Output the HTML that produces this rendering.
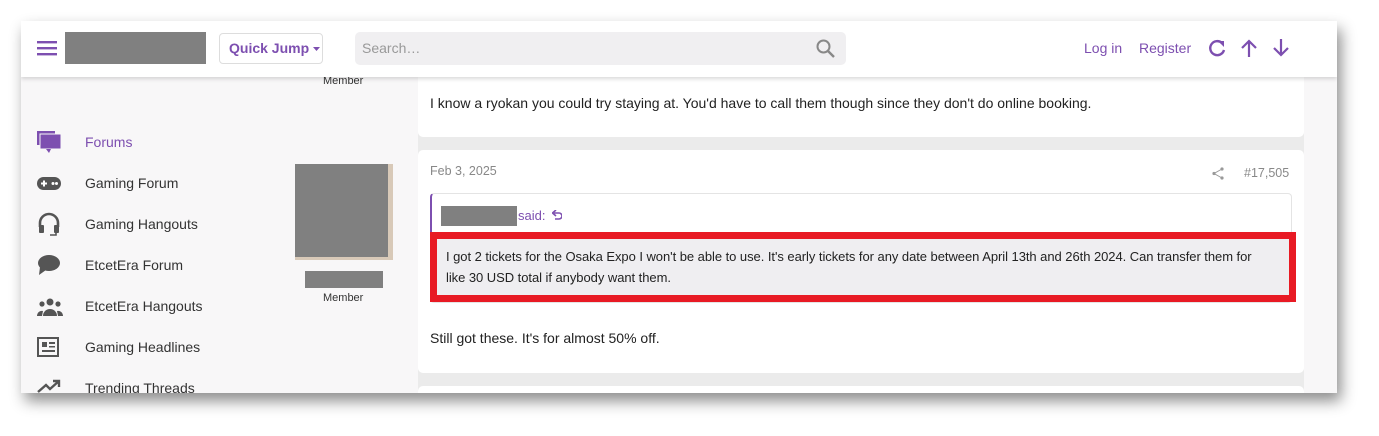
<!DOCTYPE html>
<html><head><style>
*{box-sizing:border-box;margin:0;padding:0}
body{width:1379px;height:436px;background:#fff;font-family:"Liberation Sans",Arial,sans-serif;position:relative;overflow:hidden}
.win{position:absolute;left:21px;top:21px;width:1316px;height:372px;background:#f8f7f8;box-shadow:4px 8px 14px rgba(0,0,0,.45);overflow:hidden}
.hdr{position:absolute;left:0;top:0;width:1316px;height:56px;background:#fff;box-shadow:0 2px 4px rgba(0,0,0,.15);z-index:5}
.p{color:#7d4fb0}
.abs{position:absolute}
.nav{position:absolute;left:64px;font-size:14px;color:#333}
.ic{position:absolute;left:16px}
.card{position:absolute;left:397px;width:886px;background:#fff;border-radius:5px}
.gap{position:absolute;left:397px;width:886px;background:#ebebeb}
</style></head><body>
<div class="win">
 <div class="hdr">
  <svg class="abs" style="left:16px;top:19px" width="20" height="16"><rect y="1" width="20" height="2.4" fill="#7d4fb0"/><rect y="7" width="20" height="2.4" fill="#7d4fb0"/><rect y="13" width="20" height="2.4" fill="#7d4fb0"/></svg>
  <div class="abs" style="left:44px;top:11px;width:141px;height:32px;background:#808080"></div>
  <div class="abs p" style="left:198px;top:12px;width:104px;height:31px;border:1px solid #ddd;border-radius:4px;font-size:14px;font-weight:bold;line-height:29px;padding-left:9px">Quick Jump <svg width="7" height="4" style="vertical-align:middle"><path d="M0 0h7L3.5 4z" fill="#7d4fb0"/></svg></div>
  <div class="abs" style="left:334px;top:11px;width:491px;height:33px;background:#f0eff1;border-radius:5px;color:#999;font-size:14px;line-height:33px;padding-left:7px">Search…</div>
  <svg class="abs" style="left:795px;top:18px" width="19" height="19"><circle cx="7.5" cy="7.5" r="6" fill="none" stroke="#888" stroke-width="2"/><line x1="12" y1="12" x2="18" y2="18" stroke="#888" stroke-width="2.4"/></svg>
  <div class="abs p" style="left:1063px;top:19px;font-size:14px">Log in</div>
  <div class="abs p" style="left:1118px;top:19px;font-size:14px">Register</div>
  <svg class="abs" style="left:1186px;top:17px" width="20" height="20"><path d="M15 5A7 7 0 1 0 17 12" fill="none" stroke="#7d4fb0" stroke-width="2.4"/><path d="M11 3h6v6z" fill="#7d4fb0"/></svg>
  <svg class="abs" style="left:1219px;top:17px" width="18" height="20"><path d="M9 19V3M2 10l7-7 7 7" fill="none" stroke="#7d4fb0" stroke-width="2.2"/></svg>
  <svg class="abs" style="left:1251px;top:17px" width="18" height="20"><path d="M9 1v16M2 10l7 7 7-7" fill="none" stroke="#7d4fb0" stroke-width="2.2"/></svg>
 </div>
 <div class="abs" style="left:302px;top:54px;font-size:11px;color:#333">Member</div>
 <svg class="ic" style="top:110px" width="24" height="24"><rect x="0" y="0" width="18" height="14" fill="#7d4fb0"/><rect x="3" y="3" width="21" height="15" fill="#7d4fb0" stroke="#f8f7f8" stroke-width="1"/><path d="M9 18l3 4 2-4z" fill="#7d4fb0"/></svg>
 <div class="nav p" style="top:113px;color:#7d4fb0">Forums</div>
 <svg class="ic" style="top:156px" width="24" height="14"><rect width="24" height="13" rx="6.5" fill="#555"/><rect x="4" y="5.5" width="6" height="2" fill="#fff"/><rect x="6" y="3.5" width="2" height="6" fill="#fff"/><circle cx="16" cy="6.5" r="1.5" fill="#fff"/><circle cx="19.5" cy="6.5" r="1.5" fill="#fff"/></svg>
 <div class="nav" style="top:154px">Gaming Forum</div>
 <svg class="ic" style="top:191px" width="24" height="24"><path d="M3 15V11a9 9 0 0 1 18 0v4" fill="none" stroke="#555" stroke-width="2.6"/><rect x="2" y="13" width="5" height="8" rx="1" fill="#555"/><rect x="17" y="13" width="5" height="8" rx="1" fill="#555"/><path d="M19 21v2h-6" fill="none" stroke="#555" stroke-width="1.6"/></svg>
 <div class="nav" style="top:195px">Gaming Hangouts</div>
 <svg class="ic" style="top:234px" width="24" height="22"><ellipse cx="12" cy="8" rx="11" ry="8" fill="#555"/><path d="M3 12l-1 8 7-5z" fill="#555"/></svg>
 <div class="nav" style="top:236px">EtcetEra Forum</div>
 <svg class="ic" style="top:277px" width="26" height="18"><circle cx="13" cy="4" r="3.5" fill="#555"/><circle cx="5" cy="6" r="2.6" fill="#555"/><circle cx="21" cy="6" r="2.6" fill="#555"/><path d="M6 18a7 7 0 0 1 14 0z" fill="#555"/><path d="M0 18a5 5 0 0 1 6-5l-1 5zM26 18a5 5 0 0 0-6-5l1 5z" fill="#555"/></svg>
 <div class="nav" style="top:277px">EtcetEra Hangouts</div>
 <svg class="ic" style="top:316px" width="22" height="20"><rect x="1" y="1" width="20" height="18" fill="none" stroke="#555" stroke-width="2"/><rect x="5" y="5" width="5" height="5" fill="#555"/><rect x="12" y="5" width="6" height="2" fill="#555"/><rect x="12" y="9" width="6" height="1.5" fill="#555"/><rect x="5" y="13" width="13" height="2" fill="#555"/></svg>
 <div class="nav" style="top:318px">Gaming Headlines</div>
 <svg class="ic" style="top:358px" width="24" height="14"><path d="M1 13l8-7 4 4 9-8M16 2h6v6" fill="none" stroke="#555" stroke-width="2.4"/></svg>
 <div class="nav" style="top:359px">Trending Threads</div>
 <div class="abs" style="left:274px;top:143px;width:98px;height:96px;background:#d8c9b8"></div>
 <div class="abs" style="left:274px;top:143px;width:93px;height:93px;background:#808080"></div>
 <div class="abs" style="left:284px;top:250px;width:78px;height:17px;background:#808080"></div>
 <div class="abs" style="left:302px;top:271px;font-size:11px;color:#333">Member</div>
 <div class="gap" style="top:56px;height:320px"></div>
 <div class="card" style="top:40px;height:76px"></div>
 <div class="abs" style="left:409px;top:74px;font-size:14px;color:#222">I know a ryokan you could try staying at. You'd have to call them though since they don't do online booking.</div>
 <div class="card" style="top:129px;height:223px"></div>
 <div class="abs" style="left:409px;top:143px;font-size:12.5px;color:#888">Feb 3, 2025</div>
 <svg class="abs" style="left:1191px;top:146px" width="12" height="13"><circle cx="10" cy="2" r="1.6" fill="#999"/><circle cx="2" cy="6.5" r="1.6" fill="#999"/><circle cx="10" cy="11" r="1.6" fill="#999"/><path d="M10 2L2 6.5 10 11" fill="none" stroke="#999" stroke-width="1"/></svg>
 <div class="abs" style="left:1223px;top:145px;font-size:12.5px;color:#888">#17,505</div>
 <div class="abs" style="left:409px;top:172px;width:862px;height:110px;border:1px solid #e4e4e4;border-left:2px solid #7d4fb0;border-radius:4px"></div>
 <div class="abs" style="left:420px;top:185px;width:76px;height:20px;background:#808080"></div>
 <div class="abs p" style="left:497px;top:187px;font-size:13px">said: <svg width="10" height="11" style="vertical-align:-1px;margin-left:3px"><path d="M2 3h5a3 3 0 0 1 0 6H3" fill="none" stroke="#7d4fb0" stroke-width="1.6"/><path d="M4 0L0.5 3 4 6" fill="none" stroke="#7d4fb0" stroke-width="1.6"/></svg></div>
 <div class="abs" style="left:409px;top:211px;width:866px;height:70px;border:7px solid #e81a24;background:#efeef1;font-size:13px;color:#222;line-height:21px;padding:7px 0 0 9px;letter-spacing:-0.05px">I got 2 tickets for the Osaka Expo I won't be able to use. It's early tickets for any date between April 13th and 26th 2024. Can transfer them for<br>like 30 USD total if anybody want them.</div>
 <div class="abs" style="left:409px;top:309px;font-size:14px;color:#222">Still got these. It's for almost 50% off.</div>
 <div class="card" style="top:365px;height:30px"></div>
</div>
</body></html>
